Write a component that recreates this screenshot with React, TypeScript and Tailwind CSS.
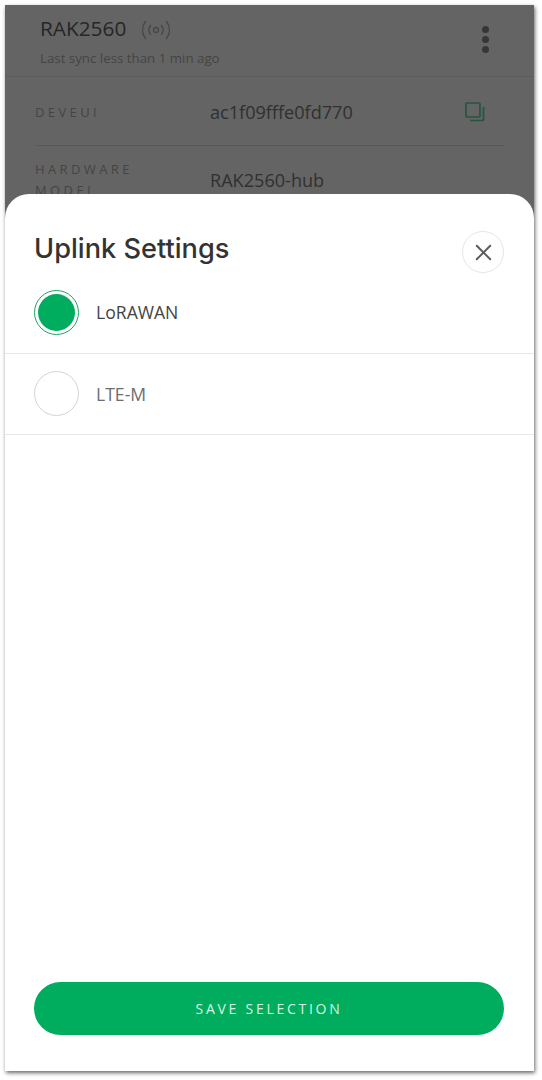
import { X } from 'lucide-react'

function SignalIcon() {
  return (
    <svg width="32" height="20" viewBox="0 0 32 20" fill="none" stroke="#474747" strokeWidth="1.3" strokeLinecap="round">
      <circle cx="16" cy="10" r="2.500" />
      <path d="M10.500 5.500c-2 2.600-2 6.400 0 9" />
      <path d="M5.500 1.500c-4 5-4 12 0 17" />
      <path d="M21.500 5.500c2 2.600 2 6.400 0 9" />
      <path d="M26.500 1.500c4 5 4 12 0 17" />
    </svg>
  )
}

function CopyIcon() {
  return (
    <svg width="20" height="20" viewBox="0 0 20 20" fill="none" stroke="#25553f" strokeWidth="1.7">
      <rect x="1" y="1" width="14" height="14" rx="1" />
      <path d="M18.500 5v12.500a1 1 0 0 1-1 1H5" />
    </svg>
  )
}

interface OptionRowProps {
  label: string
  selected?: boolean
}

function OptionRow({ label, selected }: OptionRowProps) {
  return (
    <div className="h-[81.500px] border-b border-[#e6e6e6] px-[29px] flex items-center">
      {selected ? (
        <div className="w-[45px] h-[45px] rounded-full border-[1.5px] border-[#16a862] p-[3px] shrink-0">
          <div className="w-full h-full rounded-full bg-[#00ad5e]" />
        </div>
      ) : (
        <div className="w-[45px] h-[45px] rounded-full border border-[#d4d4d4] shrink-0" />
      )}
      <span className={`ml-[17px] text-[17.600px] font-['Open_Sans',sans-serif] ${selected ? 'text-[#444444]' : 'text-[#6d6d6d]'}`}>
        {label}
      </span>
    </div>
  )
}

export default function App() {
  return (
    <div className="w-[542px] h-[1080px] bg-white pt-[5px] pl-[5px] font-['Open_Sans',sans-serif]">
      <div className="w-[529px] h-[1066px] bg-[#646464] flex flex-col shadow-[1px_2px_4px_rgba(0,0,0,0.6)]">
        <div className="h-[189px] shrink-0 overflow-hidden">
          <div className="h-[72px] border-b border-[#5d5d5d] pl-[35px] pr-[45px] flex justify-between">
            <div>
              <div className="flex items-center mt-[9px]">
                <span className="text-[20.800px] leading-[28px] text-[#262626]">RAK2560</span>
                <span className="ml-[14px] mt-[3px]"><SignalIcon /></span>
              </div>
              <div className="text-[13.300px] leading-[18px] mt-[7px] text-[#444444]">Last sync less than 1 min ago</div>
            </div>
            <div className="flex flex-col gap-[3px] mt-[21px]">
              <span className="w-[7px] h-[7px] rounded-full bg-[#363636]" />
              <span className="w-[7px] h-[7px] rounded-full bg-[#363636]" />
              <span className="w-[7px] h-[7px] rounded-full bg-[#363636]" />
            </div>
          </div>
          <div className="mx-[30px] h-[69px] border-b border-[#585858] flex items-center pt-[3px]">
            <span className="w-[175px] text-[13px] tracking-[0.26em] text-[#444444]">DEVEUI</span>
            <span className="flex-1 text-[18.100px] text-[#303030]">ac1f09fffe0fd770</span>
            <span className="mr-[19px] -mt-[1px]"><CopyIcon /></span>
          </div>
          <div className="mx-[30px] flex items-start">
            <span className="w-[110px] mr-[65px] mt-[13px] text-[13px] leading-[21px] tracking-[0.26em] text-[#444444]">HARDWARE MODEL</span>
            <span className="mt-[21px] text-[18.100px] text-[#303030]">RAK2560-hub</span>
          </div>
        </div>
        <div className="flex-1 bg-white rounded-t-[24px] flex flex-col">
          <div className="h-[78px] shrink-0 pl-[29px] pr-[30px] flex items-start justify-between">
            <h2 className="mt-[37px] text-[27.200px] leading-[36px] font-medium text-[#333333] font-['Inter',sans-serif]">Uplink Settings</h2>
            <button className="mt-[37px] w-[42px] h-[42px] rounded-full border border-[#e6e6e6] flex items-center justify-center text-[#5a5a5a]">
              <X size={27} strokeWidth={1.7} />
            </button>
          </div>
          <OptionRow label="LoRAWAN" selected />
          <OptionRow label="LTE-M" />
          <div className="flex-1" />
          <div className="pl-[29px] pr-[30px] pb-[36px]">
            <button className="w-full h-[53px] rounded-full bg-[#00ad5e] text-[#d8f3e5] text-[14px] tracking-[0.195em]">
              SAVE SELECTION
            </button>
          </div>
        </div>
      </div>
    </div>
  )
}
